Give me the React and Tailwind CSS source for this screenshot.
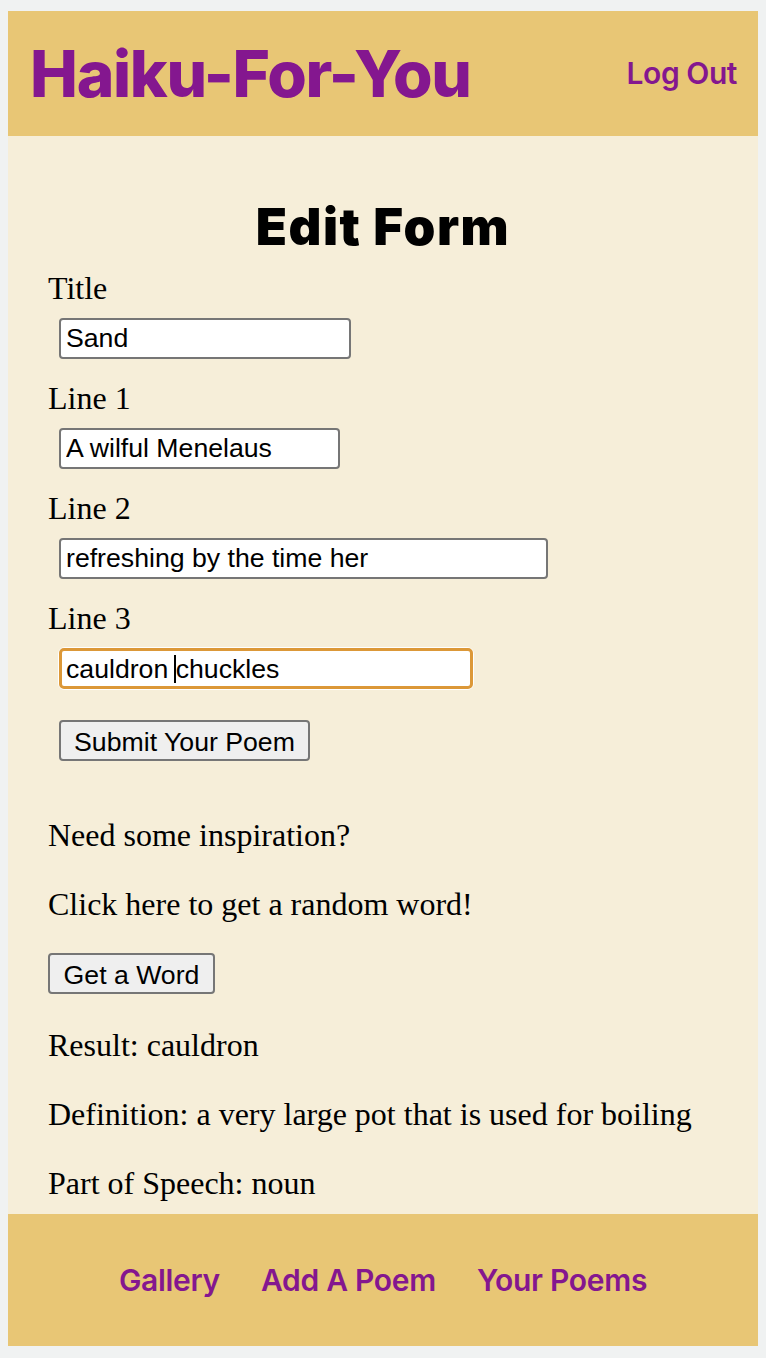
import React from 'react';

const serif = { fontFamily: '"Liberation Serif", "Times New Roman", serif' };

function Field({ label, value, width, first }) {
    return (
        <div className={first ? '' : 'mt-[21px]'}>
            <div className="text-[32px] leading-[37px] text-black" style={serif}>{label}</div>
            <input
                readOnly
                value={value}
                className={`mt-[11px] ml-[11px] block h-[41px] ${width} rounded-[4px] border-2 border-[#767676] bg-white px-[5px] text-[26.67px] text-black font-['Liberation_Sans',Arial,sans-serif] outline-none`}
            />
        </div>
    );
}

export default function App() {
    const links = ['Gallery', 'Add A Poem', 'Your Poems'];

    return (
        <div className="min-h-[1358px] bg-[#f0f2f2] pt-[11px] px-2 pb-[12px]">
            <div className="bg-[#f6eed9]">
                {/* header */}
                <header className="flex h-[125px] items-center justify-between bg-[#e8c675] pl-[22px] pr-[21px] font-['Inter',sans-serif] text-[#84178f]">
                    <h1 className="text-[64px] font-extrabold leading-none tracking-[-0.02em]">Haiku-For-You</h1>
                    <a className="text-[30px] font-semibold tracking-[-0.015em]">Log Out</a>
                </header>

                <main className="px-[40px] pb-[12px]">
                    <h2 className="pt-[60px] text-center font-['Inter',sans-serif] text-[51px] font-black leading-[62px] tracking-[0.03em] text-black">
                        Edit Form
                    </h2>

                    <form className="mt-[12px]">
                        <Field first label="Title" value="Sand" width="w-[292px]" />
                        <Field label="Line 1" value="A wilful Menelaus" width="w-[281px]" />
                        <Field label="Line 2" value="refreshing by the time her" width="w-[489px]" />

                        <div className="mt-[21px]">
                            <div className="text-[32px] leading-[37px] text-black" style={serif}>Line 3</div>
                            <div className="mt-[10px] ml-[10px] w-[416px] rounded-[7px] bg-white p-px">
                                <div className="flex h-[41px] items-center rounded-[5px] border-[3px] border-[#dc9838] bg-white px-[4px] text-[26.67px] text-black font-['Liberation_Sans',Arial,sans-serif] whitespace-pre">
                                    cauldron <span className="inline-block h-[28px] w-[2px] bg-black -ml-[2px]"></span>chuckles
                                </div>
                            </div>
                        </div>

                        <button
                            type="button"
                            className="mt-[30px] ml-[11px] block h-[41px] w-[251px] rounded-[4px] border-2 border-[#767676] bg-[#efefef] text-[26.67px] text-black font-['Liberation_Sans',Arial,sans-serif]"
                        >
                            Submit Your Poem
                        </button>
                    </form>

                    <div className="mt-[56px] text-black" style={serif}>
                        <p className="text-[32px] leading-[37px]">Need some inspiration?</p>
                        <p className="mt-[32px] text-[32px] leading-[37px]">Click here to get a random word!</p>
                        <button
                            type="button"
                            className="mt-[30px] block h-[41px] w-[167px] rounded-[4px] border-2 border-[#767676] bg-[#efefef] text-[26.67px] text-black font-['Liberation_Sans',Arial,sans-serif]"
                        >
                            Get a Word
                        </button>
                        <p className="mt-[33px] text-[32px] leading-[37px]">Result: cauldron</p>
                        <p className="mt-[32px] text-[32px] leading-[37px]">Definition: a very large pot that is used for boiling</p>
                        <p className="mt-[32px] text-[32px] leading-[37px]">Part of Speech: noun</p>
                    </div>
                </main>

                {/* footer nav */}
                <footer className="flex h-[132px] items-center justify-center gap-[41px] bg-[#e8c675] font-['Inter',sans-serif] text-[30px] font-semibold tracking-[-0.01em] text-[#84178f]">
                    {links.map((l) => (
                        <a key={l}>{l}</a>
                    ))}
                </footer>
            </div>
        </div>
    );
}
